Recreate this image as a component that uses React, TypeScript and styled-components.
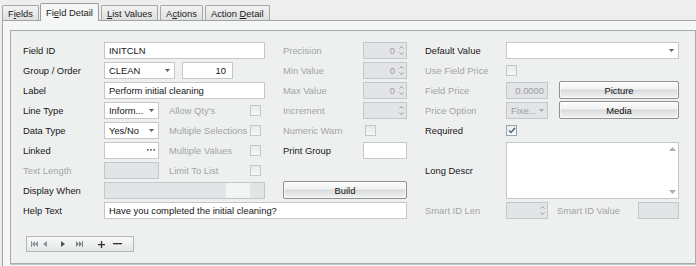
import React from 'react';
import styled, { createGlobalStyle } from 'styled-components';

const Global = createGlobalStyle`
  html, body { margin: 0; padding: 0; background: #eeeeee; }
  body { font-family: "Liberation Sans", Arial, sans-serif; font-size: 9.4px; color: #161616; }
  * { box-sizing: border-box; }
`;

const Screen = styled.div`
  width: 696px;
  height: 266px;
  overflow: hidden;
  background: #eeeeee;
`;

const TabStrip = styled.div`
  display: flex;
  align-items: flex-end;
  height: 20px;
  padding-left: 2px;
`;

const Tab = styled.div<{ $active?: boolean }>`
  position: relative;
  z-index: ${p => (p.$active ? 2 : 1)};
  height: ${p => (p.$active ? 18 : 15)}px;
  margin-left: ${p => (p.$active ? 1 : 2)}px;
  margin-bottom: ${p => (p.$active ? -1 : 0)}px;
  padding: 0 5px;
  display: flex;
  align-items: center;
  padding-top: ${p => (p.$active ? 0 : 1)}px;
  border: 1px solid ${p => (p.$active ? '#9a9ea2' : '#a4a7aa')};
  border-bottom: none;
  border-radius: 2px 2px 0 0;
  background: ${p => (p.$active ? '#f5f6f6' : 'linear-gradient(#f3f3f3, #dedfe0)')};
  color: #1a1a1a;
  white-space: nowrap;
  &:first-child { margin-left: 0; }
`;

const TabText = styled.span`
  white-space: pre;
`;

const Key = styled.span`
  text-decoration: underline;
`;

const Page = styled.div`
  margin-left: 2px;
  border-top: 1px solid #a0a3a6;
  border-left: 1px solid #a0a3a6;
  background: #f5f6f6;
  padding: 9px 0 0 7px;
  height: 246px;
`;

const GroupBox = styled.div`
  width: 686px;
  height: 234px;
  border: 1px solid #a7abaf;
  box-shadow: 0 1px 0 #c3c6c9;
  background: #eef0f0;
  padding: 9px 15px 0 12px;
`;

const Grid = styled.div`
  display: grid;
  grid-template-columns: 81px 161px 18px 80px 44px 18px 81px 173px;
  grid-template-rows: repeat(9, 20px);
`;

const Cell = styled.div<{ $c: string; $r: string }>`
  grid-column: ${p => p.$c};
  grid-row: ${p => p.$r};
  display: flex;
  align-items: center;
  min-width: 0;
`;

const Label = styled.span<{ $dim?: boolean; $ml?: number; $grow?: boolean }>`
  color: ${p => (p.$dim ? '#a2a4a6' : '#161616')};
  margin-left: ${p => p.$ml ?? 0}px;
  white-space: nowrap;
  flex: ${p => (p.$grow ? '1 1 auto' : 'none')};
`;

const Box = styled.div<{ $w?: number; $off?: boolean; $ml?: number }>`
  height: 17px;
  width: ${p => (p.$w ? `${p.$w}px` : '100%')};
  flex: none;
  margin-left: ${p => p.$ml ?? 0}px;
  border: 1px solid #c3c7cb;
  background: ${p => (p.$off ? '#e3e4e6' : '#ffffff')};
  display: flex;
  align-items: center;
  padding: 0 0 0 4px;
  color: ${p => (p.$off ? '#9a9c9e' : '#141414')};
  white-space: nowrap;
  overflow: hidden;
`;

const BoxText = styled.span<{ $right?: boolean; $pr?: number }>`
  flex: 1;
  min-width: 0;
  overflow: hidden;
  text-align: ${p => (p.$right ? 'right' : 'left')};
  padding-right: ${p => p.$pr ?? 0}px;
`;

const Memo = styled(Box)`
  height: 57px;
  align-self: center;
  align-items: stretch;
  padding: 0;
`;

const MemoScroll = styled.div`
  margin-left: auto;
  width: 12px;
  display: flex;
  flex-direction: column;
  justify-content: space-between;
  align-items: center;
  padding: 4px 0 4px;
`;

const Side = styled.div`
  width: 10px;
  height: 100%;
  flex: none;
  display: flex;
  flex-direction: column;
  align-items: center;
  justify-content: center;
  gap: 3px;
`;

const DropSide = styled(Side)<{ $w?: number }>`
  width: ${p => p.$w ?? 14}px;
`;

const Patch = styled.span`
  width: 24px;
  height: 100%;
  margin-left: auto;
  margin-right: 14px;
  background: #f3f4f4;
`;

const Check = styled.span<{ $ml?: number; $mr?: number; $on?: boolean }>`
  width: 11px;
  height: 11px;
  flex: none;
  margin-left: ${p => p.$ml ?? 0}px;
  margin-right: ${p => p.$mr ?? 0}px;
  border: 1px solid ${p => (p.$on ? '#9aa3ad' : '#c4c8cc')};
  background: ${p => (p.$on ? 'linear-gradient(#e9eef3, #fbfcfd)' : 'linear-gradient(#e8e9ea, #f6f7f7)')};
  display: flex;
  align-items: center;
  justify-content: center;
`;

const Btn = styled.div<{ $w?: number; $ml?: number }>`
  height: 18px;
  width: ${p => (p.$w ? `${p.$w}px` : '100%')};
  margin-left: ${p => p.$ml ?? 0}px;
  flex: none;
  border: 1px solid #8e9195;
  border-radius: 2px;
  background: linear-gradient(#fdfdfd 0%, #f1f1f1 42%, #dadbdc 52%, #e1e2e3 66%, #f3f3f3 100%);
  box-shadow: inset 0 0 0 1px rgba(255, 255, 255, 0.55);
  display: flex;
  align-items: center;
  justify-content: center;
  color: #111;
`;

const Navigator = styled.div`
  margin-top: 16px;
  margin-left: 3px;
  width: 108px;
  height: 16px;
  border: 1px solid #b3b7bb;
  background: linear-gradient(#f9f9f9, #e4e5e6);
  display: flex;
  align-items: center;
`;

const NavIcon = styled.span<{ $ml: number }>`
  margin-left: ${p => p.$ml}px;
  display: flex;
  align-items: center;
`;

const Arrow = ({ off }: { off?: boolean }) => (
  <svg width="5" height="3" viewBox="0 0 5 3">
    <polygon points="0,0 5,0 2.5,3" fill={off ? '#a8abae' : '#5a5d60'} />
  </svg>
);

const Chevron = ({ up }: { up?: boolean }) => (
  <svg width="5" height="3" viewBox="0 0 5 3">
    <polyline
      points={up ? '0.5,2.5 2.5,0.5 4.5,2.5' : '0.5,0.5 2.5,2.5 4.5,0.5'}
      fill="none"
      stroke="#8f9397"
      strokeWidth="0.9"
    />
  </svg>
);

const Combo = ({ w, text, off, ml, side }: { w?: number; text: string; off?: boolean; ml?: number; side?: number }) => (
  <Box $w={w} $off={off} $ml={ml}>
    <BoxText>{text}</BoxText>
    <DropSide $w={side}>
      <Arrow off={off} />
    </DropSide>
  </Box>
);

const Spin = ({ w, text }: { w?: number; text: string }) => (
  <Box $w={w} $off>
    <BoxText $right $pr={1}>{text}</BoxText>
    <Side>
      <Chevron up />
      <Chevron />
    </Side>
  </Box>
);

const Tick = () => (
  <svg width="8" height="7" viewBox="0 0 8 7">
    <polyline points="1,3.5 3,5.5 7,1" fill="none" stroke="#4c5d7c" strokeWidth="1.4" />
  </svg>
);

const Dots = () => (
  <svg width="8" height="2" viewBox="0 0 8 2">
    <rect x="0" y="0" width="1.6" height="1.6" fill="#555" />
    <rect x="3.2" y="0" width="1.6" height="1.6" fill="#555" />
    <rect x="6.4" y="0" width="1.6" height="1.6" fill="#555" />
  </svg>
);

const Tri = ({ up }: { up?: boolean }) => (
  <svg width="7" height="4" viewBox="0 0 7 4">
    <polygon points={up ? '0,4 7,4 3.5,0' : '0,0 7,0 3.5,4'} fill="#a9b0b7" />
  </svg>
);

const FirstIcon = () => (
  <svg width="7" height="6" viewBox="0 0 7 6">
    <rect x="0" y="0" width="1" height="6" fill="#8d939a" />
    <polygon points="4,0 4,6 1,3" fill="#8d939a" />
    <polygon points="7,0 7,6 4,3" fill="#8d939a" />
  </svg>
);
const LastIcon = () => (
  <svg width="7" height="6" viewBox="0 0 7 6">
    <polygon points="0,0 0,6 3,3" fill="#7d838a" />
    <polygon points="3,0 3,6 6,3" fill="#7d838a" />
    <rect x="6" y="0" width="1" height="6" fill="#7d838a" />
  </svg>
);
const PrevIcon = () => (
  <svg width="4" height="6" viewBox="0 0 4 6">
    <polygon points="4,0 4,6 0,3" fill="#8d939a" />
  </svg>
);
const NextIcon = () => (
  <svg width="4" height="6" viewBox="0 0 4 6">
    <polygon points="0,0 0,6 4,3" fill="#4f5358" />
  </svg>
);
const PlusIcon = () => (
  <svg width="7" height="7" viewBox="0 0 7 7">
    <rect x="0" y="3" width="7" height="1.3" fill="#2e3135" />
    <rect x="2.85" y="0" width="1.3" height="7" fill="#2e3135" />
  </svg>
);
const MinusIcon = () => (
  <svg width="9" height="2" viewBox="0 0 9 2">
    <rect x="0" y="0" width="9" height="1.3" fill="#2e3135" />
  </svg>
);

export default function App() {
  return (
    <Screen>
      <Global />
      <TabStrip>
        <Tab><TabText>F<Key>i</Key>elds</TabText></Tab>
        <Tab $active><TabText>Fi<Key>e</Key>ld Detail</TabText></Tab>
        <Tab><TabText><Key>L</Key>ist Values</TabText></Tab>
        <Tab><TabText>A<Key>c</Key>tions</TabText></Tab>
        <Tab><TabText>{'Action '}<Key>D</Key>etail</TabText></Tab>
      </TabStrip>
      <Page>
        <GroupBox>
          <Grid>
            {/* Row 1 */}
            <Cell $c="1" $r="1"><Label>Field ID</Label></Cell>
            <Cell $c="2" $r="1"><Box><BoxText>INITCLN</BoxText></Box></Cell>
            <Cell $c="4" $r="1"><Label $dim>Precision</Label></Cell>
            <Cell $c="5" $r="1"><Spin text="0" /></Cell>
            <Cell $c="7" $r="1"><Label>Default Value</Label></Cell>
            <Cell $c="8" $r="1"><Combo text="" /></Cell>

            {/* Row 2 */}
            <Cell $c="1" $r="2"><Label>Group / Order</Label></Cell>
            <Cell $c="2" $r="2">
              <Combo w={71} text="CLEAN" />
              <Box $w={51} $ml={7}><BoxText $right $pr={6}>10</BoxText></Box>
            </Cell>
            <Cell $c="4" $r="2"><Label $dim>Min Value</Label></Cell>
            <Cell $c="5" $r="2"><Spin text="0" /></Cell>
            <Cell $c="7" $r="2"><Label $dim>Use Field Price</Label></Cell>
            <Cell $c="8" $r="2"><Check /></Cell>

            {/* Row 3 */}
            <Cell $c="1" $r="3"><Label>Label</Label></Cell>
            <Cell $c="2" $r="3"><Box><BoxText>Perform initial cleaning</BoxText></Box></Cell>
            <Cell $c="4" $r="3"><Label $dim>Max Value</Label></Cell>
            <Cell $c="5" $r="3"><Spin text="0" /></Cell>
            <Cell $c="7" $r="3"><Label $dim>Field Price</Label></Cell>
            <Cell $c="8" $r="3">
              <Box $w={42} $off><BoxText $right $pr={3}>0.0000</BoxText></Box>
              <Btn $w={120} $ml={11}>Picture</Btn>
            </Cell>

            {/* Row 4 */}
            <Cell $c="1" $r="4"><Label>Line Type</Label></Cell>
            <Cell $c="2" $r="4">
              <Combo w={55} text="Inform..." />
              <Label $dim $grow $ml={10}>Allow Qty's</Label>
              <Check $mr={4} />
            </Cell>
            <Cell $c="4" $r="4"><Label $dim>Increment</Label></Cell>
            <Cell $c="5" $r="4"><Spin text="" /></Cell>
            <Cell $c="7" $r="4"><Label $dim>Price Option</Label></Cell>
            <Cell $c="8" $r="4">
              <Combo w={42} text="Fixe..." off side={11} />
              <Btn $w={120} $ml={11}>Media</Btn>
            </Cell>

            {/* Row 5 */}
            <Cell $c="1" $r="5"><Label>Data Type</Label></Cell>
            <Cell $c="2" $r="5">
              <Combo w={55} text="Yes/No" />
              <Label $dim $grow $ml={10}>Multiple Selections</Label>
              <Check $mr={4} />
            </Cell>
            <Cell $c="4" $r="5"><Label $dim>Numeric Warn</Label></Cell>
            <Cell $c="5" $r="5"><Check $ml={2} /></Cell>
            <Cell $c="7" $r="5"><Label>Required</Label></Cell>
            <Cell $c="8" $r="5"><Check $on><Tick /></Check></Cell>

            {/* Row 6 */}
            <Cell $c="1" $r="6"><Label>Linked</Label></Cell>
            <Cell $c="2" $r="6">
              <Box $w={55}>
                <BoxText />
                <DropSide><Dots /></DropSide>
              </Box>
              <Label $dim $grow $ml={10}>Multiple Values</Label>
              <Check $mr={4} />
            </Cell>
            <Cell $c="4" $r="6"><Label>Print Group</Label></Cell>
            <Cell $c="5" $r="6"><Box /></Cell>
            <Cell $c="7" $r="6 / 9"><Label>Long Descr</Label></Cell>
            <Cell $c="8" $r="6 / 9">
              <Memo>
                <MemoScroll>
                  <Tri up />
                  <Tri />
                </MemoScroll>
              </Memo>
            </Cell>

            {/* Row 7 */}
            <Cell $c="1" $r="7"><Label $dim>Text Length</Label></Cell>
            <Cell $c="2" $r="7">
              <Box $w={55} $off />
              <Label $dim $grow $ml={10}>Limit To List</Label>
              <Check $mr={4} />
            </Cell>

            {/* Row 8 */}
            <Cell $c="1" $r="8"><Label>Display When</Label></Cell>
            <Cell $c="2" $r="8">
              <Box $off>
                <Patch />
              </Box>
            </Cell>
            <Cell $c="4 / 6" $r="8"><Btn>Build</Btn></Cell>

            {/* Row 9 */}
            <Cell $c="1" $r="9"><Label>Help Text</Label></Cell>
            <Cell $c="2 / 6" $r="9">
              <Box><BoxText>Have you completed the initial cleaning?</BoxText></Box>
            </Cell>
            <Cell $c="7" $r="9"><Label $dim>Smart ID Len</Label></Cell>
            <Cell $c="8" $r="9">
              <Spin w={42} text="" />
              <Label $dim $grow $ml={9}>Smart ID Value</Label>
              <Box $w={41} $off />
            </Cell>
          </Grid>
          <Navigator>
            <NavIcon $ml={4}><FirstIcon /></NavIcon>
            <NavIcon $ml={5}><PrevIcon /></NavIcon>
            <NavIcon $ml={14}><NextIcon /></NavIcon>
            <NavIcon $ml={11}><LastIcon /></NavIcon>
            <NavIcon $ml={15}><PlusIcon /></NavIcon>
            <NavIcon $ml={8}><MinusIcon /></NavIcon>
          </Navigator>
        </GroupBox>
      </Page>
    </Screen>
  );
}
